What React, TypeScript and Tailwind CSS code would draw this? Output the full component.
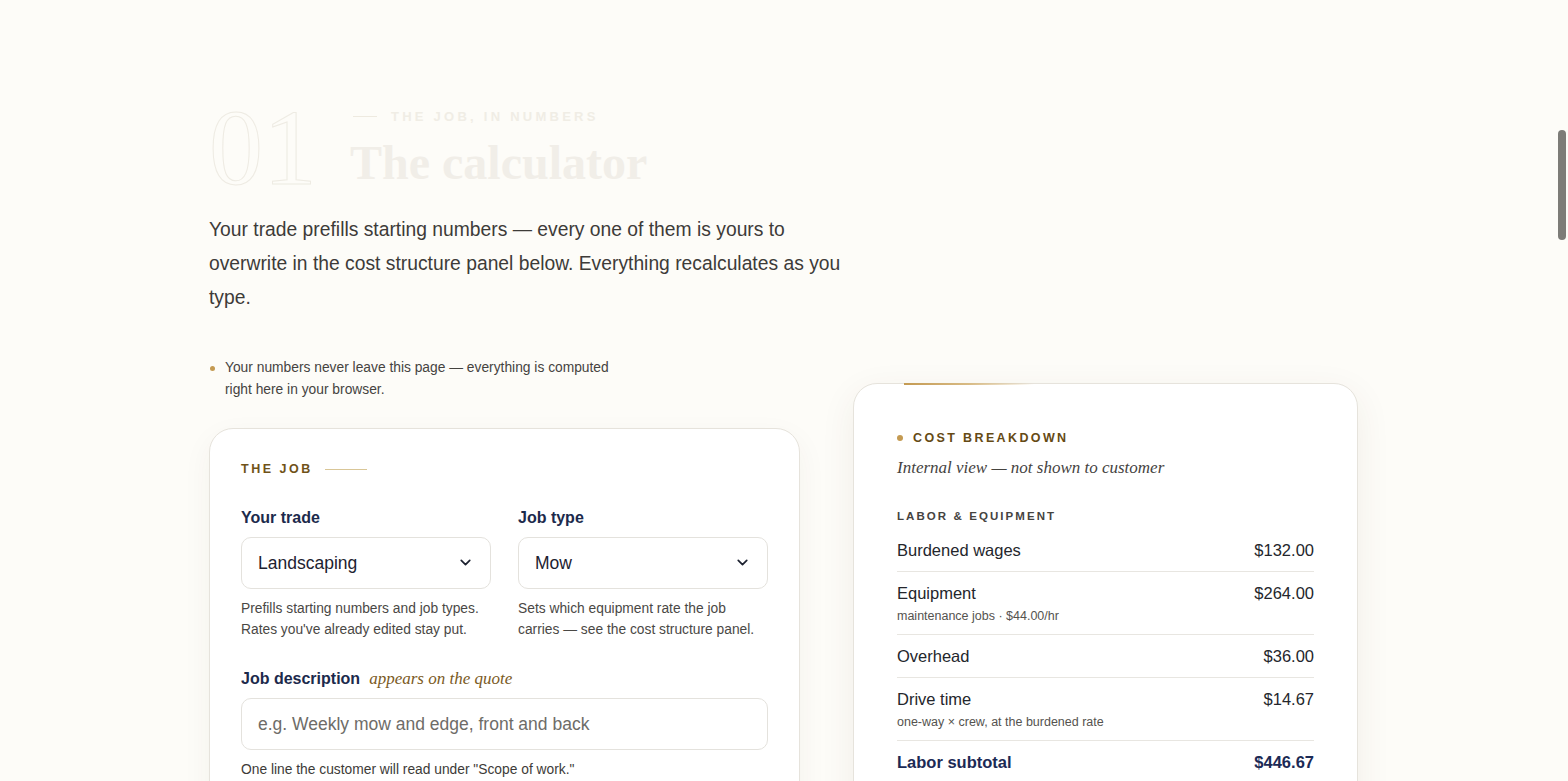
import { ChevronDown } from "lucide-react";

const sans = "font-['Liberation_Sans',Arial,sans-serif]";
const serif = "font-['Liberation_Serif','Times_New_Roman',serif]";

const ROWS = [
  { label: "Burdened wages", value: "$132.00" },
  { label: "Equipment", value: "$264.00", note: "maintenance jobs · $44.00/hr" },
  { label: "Overhead", value: "$36.00" },
  { label: "Drive time", value: "$14.67", note: "one-way × crew, at the burdened rate" },
];

function Select({ value }: { value: string }) {
  return (
    <div className="flex h-[52px] items-center justify-between rounded-[10px] border border-[#e4e2dd] bg-white pl-[16px] pr-[16px]">
      <span className="text-[17.5px] text-[#1d2230]">{value}</span>
      <ChevronDown size={17} strokeWidth={2.4} className="text-[#1d2230]" />
    </div>
  );
}

export default function App() {
  return (
    <div className={`relative min-h-screen bg-[#fdfcf8] ${sans}`}>
      {/* scroll thumb */}
      <div className="fixed right-[2px] top-[130px] h-[110px] w-[8px] rounded-full bg-[#7d7c78]" />

      <div className="mx-auto max-w-[1150px] pt-[98px] pb-20">
        {/* section heading */}
        <div className="flex items-start gap-[33px]">
          <span className={`${serif} mt-[4px] text-[108px] leading-[92px] text-transparent [-webkit-text-stroke:1px_#eeebe3]`}>01</span>
          <div className="pt-[9px]">
            <div className="flex items-center gap-[14px]">
              <span className="ml-[3px] h-px w-[24px] bg-[#eeeae0]" />
              <span className="text-[13px] font-bold tracking-[0.25em] text-[#f0ede5]">THE JOB, IN NUMBERS</span>
            </div>
            <h2 className={`${serif} mt-[10px] text-[48px] font-bold leading-[52px] text-[#f1eee8]`}>The calculator</h2>
          </div>
        </div>

        <p className="mt-[19px] max-w-[645px] text-[19.3px] leading-[34px] text-[#3d3b38]">
          Your trade prefills starting numbers — every one of them is yours to overwrite in the cost structure panel below. Everything recalculates as you type.
        </p>

        <div className="mt-[42px] grid grid-cols-[591px_505px] items-start gap-[53px]">
          {/* left column */}
          <div>
            <div className="flex items-start gap-[10px]">
              <span className="mt-[9px] ml-[1px] h-[5px] w-[5px] rounded-full bg-[#c49a52]" />
              <p className="max-w-[390px] text-[13.8px] leading-[22px] text-[#45433f]">
                Your numbers never leave this page — everything is computed right here in your browser.
              </p>
            </div>

            <div className="mt-[27px] rounded-[24px] border border-[#e6e3dc] bg-white px-[31px] pt-[31px] pb-10 shadow-[0_10px_30px_rgba(80,60,20,0.05)]">
              <div className="flex items-center gap-[12px]">
                <span className="text-[12.5px] font-bold tracking-[0.2em] text-[#6f5218]">THE JOB</span>
                <span className="h-px w-[42px] bg-[#d9c697]" />
              </div>

              <div className="mt-[27px] grid grid-cols-2 gap-[27px]">
                <div>
                  <div className="mb-[7px] text-[16px] font-bold text-[#1c2a4c]">Your trade</div>
                  <Select value="Landscaping" />
                  <p className="mt-[9px] text-[13.8px] leading-[21px] text-[#4a4845]">
                    Prefills starting numbers and job types. Rates you've already edited stay put.
                  </p>
                </div>
                <div>
                  <div className="mb-[7px] text-[16px] font-bold text-[#1c2a4c]">Job type</div>
                  <Select value="Mow" />
                  <p className="mt-[9px] text-[13.8px] leading-[21px] text-[#4a4845]">
                    Sets which equipment rate the job carries — see the cost structure panel.
                  </p>
                </div>
              </div>

              <div className="mt-[26px]">
                <div className="mb-[7px] flex items-baseline gap-[9px]">
                  <span className="text-[16px] font-bold text-[#1c2a4c]">Job description</span>
                  <span className={`${serif} text-[17px] italic text-[#7a5a1e]`}>appears on the quote</span>
                </div>
                <input
                  placeholder="e.g. Weekly mow and edge, front and back"
                  className="h-[52px] w-full rounded-[10px] border border-[#e4e2dd] bg-white px-[16px] text-[17.5px] text-[#1d2230] outline-none placeholder:text-[#6e6c68]"
                />
                <p className="mt-[9px] text-[13.8px] leading-[21px] text-[#3d3b38]">
                  One line the customer will read under "Scope of work."
                </p>
              </div>
            </div>
          </div>

          {/* right column */}
          <div className="relative mt-[26px] rounded-[24px] border border-[#e6e3dc] bg-white px-[43px] pt-[45px] pb-10 shadow-[0_10px_36px_rgba(80,60,20,0.07)]">
            <span className="absolute -top-px left-[50px] h-[2px] w-[130px] bg-gradient-to-r from-[#c49a52] via-[#d8bb85] to-transparent" />
            <div className="flex items-center gap-[10px]">
              <span className="h-[6px] w-[6px] rounded-full bg-[#c49a52]" />
              <span className="text-[12.5px] font-bold tracking-[0.19em] text-[#654a14]">COST BREAKDOWN</span>
            </div>
            <p className={`${serif} mt-[7px] text-[17px] italic text-[#45433f]`}>Internal view — not shown to customer</p>

            <div className="mt-[28px] text-[11.5px] font-bold tracking-[0.18em] text-[#45433f]">LABOR &amp; EQUIPMENT</div>

            <div className="mt-[3px]">
              {ROWS.map((r) => (
                <div key={r.label} className="border-b border-[#e8e6e1] py-[8px]">
                  <div className="flex items-center justify-between leading-[26px]">
                    <span className="text-[16.5px] text-[#24262c]">{r.label}</span>
                    <span className="text-[16.5px] text-[#24262c]">{r.value}</span>
                  </div>
                  {r.note && <div className="mt-[1px] text-[12.5px] leading-[19px] text-[#55534f]">{r.note}</div>}
                </div>
              ))}
              <div className="flex items-center justify-between py-[8px] leading-[26px]">
                <span className="text-[16.5px] font-bold text-[#1c2a55]">Labor subtotal</span>
                <span className="text-[16.5px] font-bold text-[#1c2a55]">$446.67</span>
              </div>
            </div>
          </div>
        </div>
      </div>
    </div>
  );
}
